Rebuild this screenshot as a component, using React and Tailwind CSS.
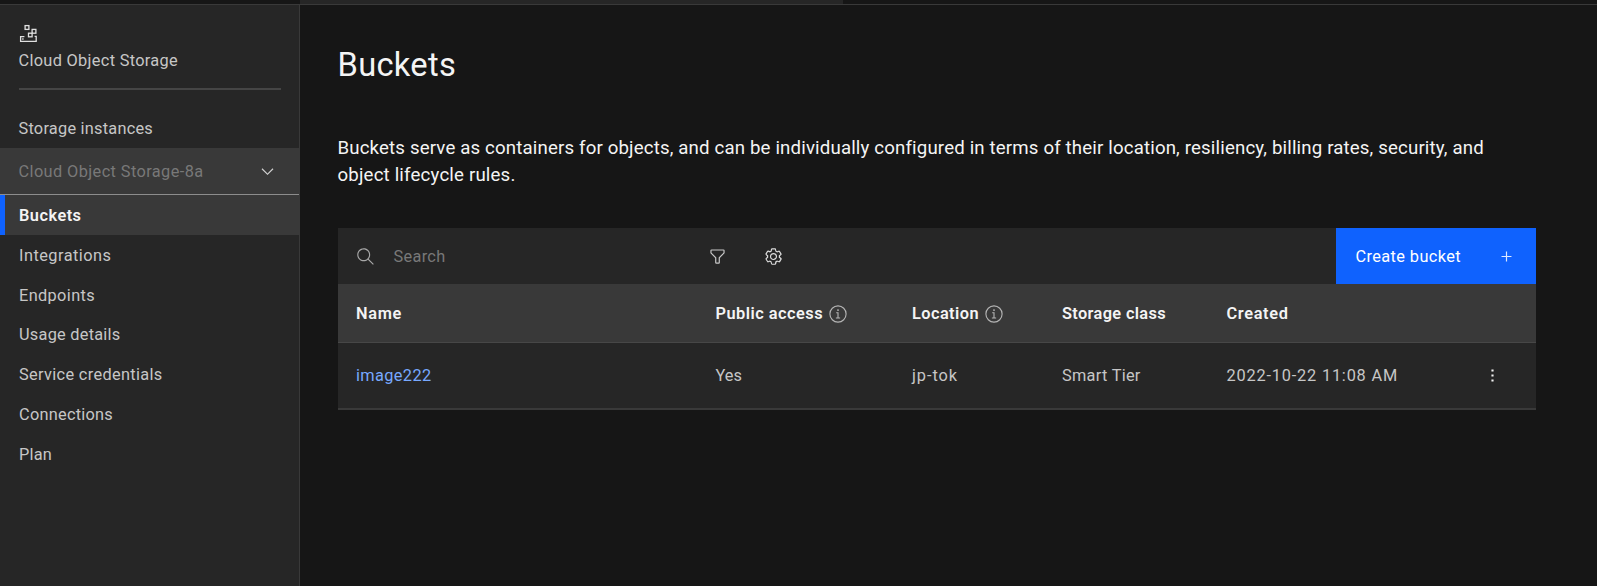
import React from "react";

const navItems = [
  { label: "Integrations", className: "tracking-[0.476px]" },
  { label: "Endpoints", className: "tracking-[0.362px]" },
  { label: "Usage details", className: "tracking-[0.251px]" },
  { label: "Service credentials", className: "tracking-[0.33px]" },
  { label: "Connections", className: "tracking-[0.25px]" },
  { label: "Plan", className: "tracking-[0.208px]" },
];

function Icon({ className, d, viewBox = "0 0 16 16" }) {
  return (
    <svg className={`shrink-0 ${className}`} viewBox={viewBox} fill="currentColor" aria-hidden="true">
      <path d={d} />
    </svg>
  );
}

function ObjectStorageIcon() {
  return (
    <svg className="block size-[19px]" viewBox="0 0 19 19" fill="none" stroke="#e0e0e0" strokeWidth="1.3" aria-hidden="true">
      <rect x="6.1" y="1.6" width="3.8" height="3.8" />
      <rect x="13.1" y="5.4" width="3.8" height="3.8" />
      <rect x="9.5" y="9.2" width="3.6" height="3.6" />
      <path d="M5.4 12.6H1.6v4.8h15.6v-5H15.6M3.2 15h1.4" />
    </svg>
  );
}

function InfoIcon() {
  return (
    <svg className="ml-[6px] size-[18px] shrink-0" viewBox="0 0 16 16" fill="none" stroke="#b4b4b4" strokeWidth="1" aria-hidden="true">
      <circle cx="8" cy="8" r="7.2" />
      <path d="M6.4 6.9H8v4.4M6.1 11.5h3.8" />
      <circle cx="8" cy="4.5" r="0.75" fill="#c6c6c6" stroke="none" />
    </svg>
  );
}

const icons = {
  chevron: "M8 11L3 6 3.7 5.3 8 9.6 12.3 5.3 13 6z",
  search:
    "M15,14.3L10.7,10c1.9-2.3,1.6-5.8-0.7-7.7S4.2,0.7,2.3,3S0.7,8.8,3,10.7c2,1.7,5,1.7,7,0l4.3,4.3L15,14.3z M2,6.5 C2,4,4,2,6.5,2S11,4,11,6.5S9,11,6.5,11S2,9,2,6.5z",
  filter:
    "M18,28H14a2,2,0,0,1-2-2V18.41L4.59,11A2,2,0,0,1,4,9.59V6A2,2,0,0,1,6,4H26a2,2,0,0,1,2,2V9.59A2,2,0,0,1,27.41,11L20,18.41V26A2,2,0,0,1,18,28ZM6,6V9.59l8,8V26h4V17.59l8-8V6Z",
  settings:
    "M13.5,8.4c0-0.1,0-0.3,0-0.4c0-0.1,0-0.3,0-0.4l1-0.8c0.4-0.3,0.4-0.9,0.2-1.3l-1.2-2C13.3,3.2,13,3,12.6,3 c-0.1,0-0.2,0-0.3,0.1l-1.2,0.4c-0.2-0.1-0.4-0.3-0.7-0.4l-0.3-1.3C10.1,1.3,9.7,1,9.2,1H6.8c-0.5,0-0.9,0.3-1,0.8L5.6,3.1 C5.3,3.2,5.1,3.3,4.9,3.4L3.7,3C3.6,3,3.5,3,3.4,3C3,3,2.7,3.2,2.5,3.5l-1.2,2C1.1,5.9,1.2,6.4,1.6,6.8l0.9,0.9c0,0.1,0,0.3,0,0.4 c0,0.1,0,0.3,0,0.4L1.6,9.2c-0.4,0.3-0.5,0.9-0.2,1.3l1.2,2C2.7,12.8,3,13,3.4,13c0.1,0,0.2,0,0.3-0.1l1.2-0.4 c0.2,0.1,0.4,0.3,0.7,0.4l0.3,1.3c0.1,0.5,0.5,0.8,1,0.8h2.4c0.5,0,0.9-0.3,1-0.8l0.3-1.3c0.2-0.1,0.4-0.2,0.7-0.4l1.2,0.4 c0.1,0,0.2,0.1,0.3,0.1c0.4,0,0.7-0.2,0.9-0.5l1.1-2c0.2-0.4,0.2-0.9-0.2-1.3L13.5,8.4z M12.6,12l-1.7-0.6c-0.4,0.3-0.9,0.6-1.4,0.8 L9.2,14H6.8l-0.4-1.8c-0.5-0.2-0.9-0.5-1.4-0.8L3.4,12l-1.2-2l1.4-1.2c-0.1-0.5-0.1-1.1,0-1.6L2.2,6l1.2-2l1.7,0.6 C5.5,4.2,6,4,6.5,3.8L6.8,2h2.4l0.4,1.8c0.5,0.2,0.9,0.5,1.4,0.8L12.6,4l1.2,2l-1.4,1.2c0.1,0.5,0.1,1.1,0,1.6l1.4,1.2L12.6,12z M8,11c-1.7,0-3-1.3-3-3s1.3-3,3-3s3,1.3,3,3C11,9.6,9.7,11,8,11C8,11,8,11,8,11z M8,6C6.9,6,6,6.8,6,7.9C6,7.9,6,8,6,8c0,1.1,0.8,2,1.9,2c0,0,0.1,0,0.1,0c1.1,0,2-0.8,2-1.9c0,0,0-0.1,0-0.1C10,6.9,9.2,6,8,6z",
  plus: "M8.5 7.5V3.8H7.5v3.7H3.8v1h3.7v3.7h1V8.5h3.7v-1z",
  overflow: "M7.1 2.9h1.8v1.8H7.1zM7.1 7.1h1.8v1.8H7.1zM7.1 11.3h1.8v1.8H7.1z",
};

function Sidebar() {
  return (
    <aside className="flex w-[300px] shrink-0 flex-col border-r border-[#393939] bg-[#262626]">
      <div className="mx-[18.5px] h-[85px] w-[262.5px] border-b-2 border-[#454545] pt-[19px]">
        <ObjectStorageIcon />
        <div className="mt-[6px] leading-[24px] tracking-[0.316px]">Cloud Object Storage</div>
      </div>
      <nav className="flex flex-col">
        <a className="mt-[18px] flex h-[39px] items-center pl-[18.5px] pt-[2px] tracking-[0.238px]">Storage instances</a>
        <div className="mt-px flex h-[47px] items-center justify-between border-b border-[#8d8d8d] bg-[#393939] pl-[18.5px] pr-[22px] tracking-[0.402px] text-[#787878]">
          <span className="pt-[2px]">Cloud Object Storage-8a</span>
          <Icon className="size-[19px] text-[#d0d0d0]" d={icons.chevron} />
        </div>
        <a className="flex h-[40px] items-center border-l-[5px] border-[#0f62fe] bg-[#393939] pl-[14px] pt-px font-semibold tracking-[0.483px] text-[#f4f4f4]">
          Buckets
        </a>
        {navItems.map((item) => (
          <a key={item.label} className={`flex h-[39.8px] items-center pl-[19px] pt-[2px] ${item.className}`}>
            {item.label}
          </a>
        ))}
      </nav>
    </aside>
  );
}

function BucketTable() {
  const grid = "grid grid-cols-[359.5px_196.5px_150px_164.5px_256.5px_1fr] items-center pl-[18.5px]";
  return (
    <section className="mt-[39px] w-[1198px]">
      <div className="flex h-[56px] items-center bg-[#262626]">
        <div className="flex w-[361px] items-center pl-[18px]">
          <Icon className="size-[19px] text-[#a8a8a8]" d={icons.search} />
          <span className="ml-[19px] pt-[2px] tracking-[0.307px] text-[#787878]">Search</span>
        </div>
        <div className="flex flex-1 items-center gap-[37px] pl-[9px] text-[#c8c8c8]">
          <Icon className="size-[19px]" d={icons.filter} viewBox="0 0 32 32" />
          <Icon className="size-[19px] text-[#dcdcdc]" d={icons.settings} />
        </div>
        <button className="flex h-full w-[199.5px] items-center justify-between bg-[#0f62fe] pl-[19.5px] pr-[20px] text-white">
          <span className="pt-[2px] tracking-[0.39px]">Create bucket</span>
          <Icon className="size-[19px] text-[#dce8ff]" d={icons.plus} />
        </button>
      </div>
      <div className={`${grid} h-[59px] border-b border-[#474747] bg-[#393939] pt-[2px] font-semibold text-[#f4f4f4]`}>
        <span className="tracking-[0.677px]">Name</span>
        <span className="flex items-center">
          <span className="tracking-[0.49px]">Public access</span>
          <InfoIcon />
        </span>
        <span className="flex items-center">
          <span className="tracking-[0.44px]">Location</span>
          <InfoIcon />
        </span>
        <span className="tracking-[0.361px]">Storage class</span>
        <span className="tracking-[0.654px]">Created</span>
      </div>
      <div className={`${grid} h-[67px] border-b-2 border-[#393939] bg-[#262626] pt-px`}>
        <span className="tracking-[0.372px] text-[#78a9ff]">image222</span>
        <span className="tracking-[0.042px]">Yes</span>
        <span className="tracking-[0.94px]">jp-tok</span>
        <span className="tracking-[0.288px]">Smart Tier</span>
        <span className="tracking-[0.81px]">2022-10-22 11:08 AM</span>
        <Icon className="mb-px size-[19px] text-[#f4f4f4]" d={icons.overflow} />
      </div>
    </section>
  );
}

export default function App() {
  return (
    <div className="flex h-[586px] w-full flex-col overflow-hidden bg-[#161616] font-[Roboto,sans-serif] text-[16.33px] leading-[22px] text-[#c6c6c6]">
      <header className="h-[5px] shrink-0 border-b border-[#393939]">
        <div className="ml-[300px] h-[4px] w-[543px] bg-[#262626]" />
      </header>
      <div className="flex min-h-0 flex-1">
        <Sidebar />
        <main className="flex-1 pl-[37.5px]">
          <h1 className="mt-[38px] text-[32.67px] leading-[44px] tracking-[0.3px] text-[#f4f4f4]">Buckets</h1>
          <p className="mt-[48px] text-[18.67px] leading-[27px] text-[#f4f4f4]">
            <span className="block tracking-[0.15px]">
              Buckets serve as containers for objects, and can be individually configured in terms of their location, resiliency, billing rates, security, and
            </span>
            <span className="block tracking-[0.17px]">object lifecycle rules.</span>
          </p>
          <BucketTable />
        </main>
      </div>
    </div>
  );
}
